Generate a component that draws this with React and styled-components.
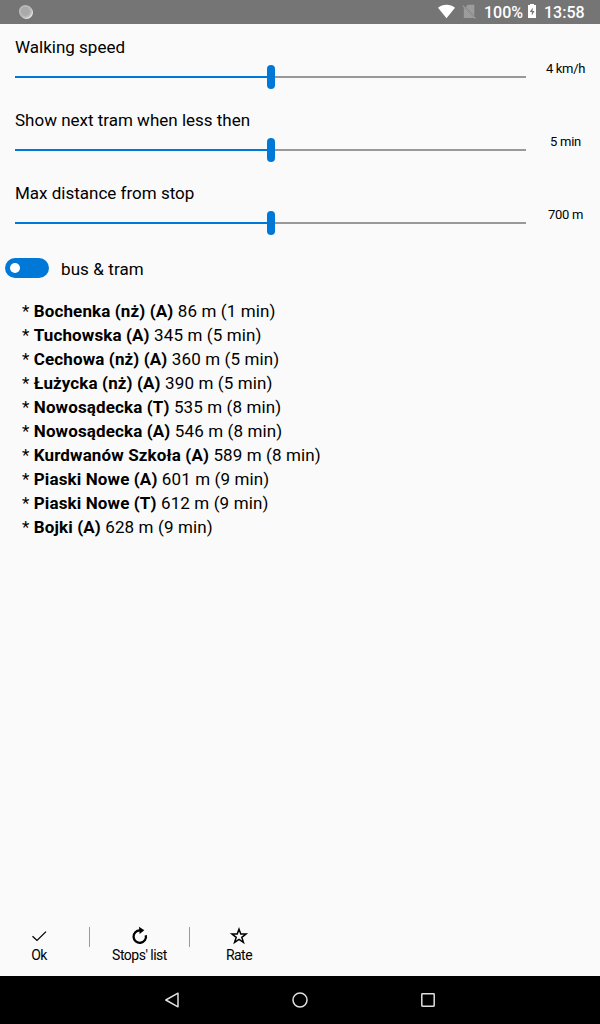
import React from "react";
import styled, { createGlobalStyle } from "styled-components";

const GlobalStyle = createGlobalStyle`
  body { margin: 0; background: #fafafa; }
  * { box-sizing: border-box; }
`;

const Screen = styled.div`
  width: 600px;
  height: 1024px;
  display: flex;
  flex-direction: column;
  background: #fafafa;
  color: #000;
  font-family: Roboto, sans-serif;
  font-size: 17px;
  overflow: hidden;
`;

const StatusBar = styled.header`
  height: 24px;
  flex: none;
  display: flex;
  align-items: center;
  padding: 0 16px 0 18px;
  background: #757575;
  color: #fff;
`;

const StatusIcons = styled.div`
  margin-left: auto;
  height: 24px;
  display: flex;
  align-items: center;
`;

const StatusIcon = styled.svg`
  display: block;
  flex: none;
  margin-right: ${(p) => p.$gap || 0}px;
`;

const StatusText = styled.span`
  width: ${(p) => p.$width}px;
  margin-right: ${(p) => p.$gap || 0}px;
  font-size: 16px;
  font-weight: 500;
  line-height: 24px;
  padding-top: 1px;
  white-space: nowrap;
`;

const Settings = styled.main`
  flex: 1;
  display: flex;
  flex-direction: column;
`;

const SliderRow = styled.section`
  height: 73px;
  display: flex;
  padding-left: 15px;
`;

const SliderMain = styled.div`
  width: 511px;
  flex: none;
`;

const SliderLabel = styled.div`
  height: 41px;
  padding-top: 11px;
  line-height: 24px;
  white-space: nowrap;
`;

const Track = styled.div`
  height: 24px;
  display: flex;
  align-items: center;
`;

const Rail = styled.div`
  height: 2px;
  width: ${(p) => p.$width}px;
  background: ${(p) => (p.$filled ? "#0078d7" : "#999")};
`;

const Thumb = styled.div`
  width: 8px;
  height: 24px;
  border-radius: 4px;
  background: #0078d7;
`;

const SliderValue = styled.div`
  flex: 1;
  padding: 35px 0 0 5px;
  text-align: center;
  font-size: 13px;
  line-height: 20px;
  letter-spacing: -0.3px;
`;

const ToggleRow = styled.div`
  display: flex;
  align-items: center;
  gap: 12px;
  height: 24px;
  margin-top: 14px;
  padding-left: 5px;
`;

const Toggle = styled.div`
  width: 44px;
  height: 20px;
  padding: 5px;
  border-radius: 10px;
  background: #0078d7;
  margin-bottom: 2px;
`;

const Knob = styled.div`
  width: 10px;
  height: 10px;
  border-radius: 50%;
  background: #fff;
`;

const ToggleLabel = styled.span`
  line-height: 24px;
  letter-spacing: 0.1px;
`;

const StopList = styled.ul`
  list-style: none;
  margin: 18px 0 0;
  padding: 0 0 0 22px;
`;

const Stop = styled.li`
  height: 24px;
  line-height: 24px;
  letter-spacing: 0.12px;
  white-space: nowrap;
`;

const StopName = styled.b`
  font-weight: 700;
`;

const CommandBar = styled.footer`
  height: 56px;
  flex: none;
  display: flex;
`;

const Command = styled.div`
  width: ${(p) => p.$width}px;
  display: flex;
  flex-direction: column;
  align-items: center;
  padding-top: 6px;
  font-size: 14px;
  line-height: 18px;
  letter-spacing: -0.5px;
  white-space: nowrap;
`;

const CommandIcon = styled.svg`
  display: block;
  width: 20px;
  height: 20px;
`;

const Divider = styled.div`
  width: 1px;
  height: 20px;
  margin-top: 7px;
  margin-left: ${(p) => p.$before || 0}px;
  background: #999;
`;

const NavBar = styled.nav`
  height: 48px;
  flex: none;
  display: flex;
  align-items: center;
  justify-content: center;
  gap: 104px;
  background: #000;
`;

const NavIcon = styled.svg`
  width: 24px;
  height: 24px;
  fill: none;
  stroke: #e0e0e0;
  stroke-width: 1.5;
`;

const sliders = [
  { label: "Walking speed", value: "4 km/h" },
  { label: "Show next tram when less then", value: "5 min" },
  { label: "Max distance from stop", value: "700 m" },
];

const stops = [
  ["Bochenka (nż) (A)", "86 m (1 min)"],
  ["Tuchowska (A)", "345 m (5 min)"],
  ["Cechowa (nż) (A)", "360 m (5 min)"],
  ["Łużycka (nż) (A)", "390 m (5 min)"],
  ["Nowosądecka (T)", "535 m (8 min)"],
  ["Nowosądecka (A)", "546 m (8 min)"],
  ["Kurdwanów Szkoła (A)", "589 m (8 min)"],
  ["Piaski Nowe (A)", "601 m (9 min)"],
  ["Piaski Nowe (T)", "612 m (9 min)"],
  ["Bojki (A)", "628 m (9 min)"],
];

export default function App() {
  return (
    <Screen>
      <GlobalStyle />
      <StatusBar>
        <StatusIcon width="16" height="16" viewBox="0 0 16 16">
          <circle cx="8.5" cy="8.5" r="6.5" fill="#e4e4e4" />
          <circle cx="7.4" cy="7.4" r="6.5" fill="#b9b9b9" />
          <circle cx="7.3" cy="7.3" r="4.6" fill="#aaa" />
        </StatusIcon>
        <StatusIcons>
          <StatusIcon $gap={7} width="18" height="16" viewBox="0 0 18 16">
            <path d="M1 3.7C5.5-.2 13.5-.2 18 3.7L9.5 14.2z" fill="#fff" />
          </StatusIcon>
          <StatusIcon $gap={8} width="14" height="16" viewBox="0 0 14 16">
            <path d="M5.8 .8H12.3V11.9L3.6 3zM1.8 3.6 12 14H1.8z" fill="#9c9c9c" />
            <path d="M.8 1.6 13.4 14.5" stroke="#9c9c9c" strokeWidth="1.2" />
          </StatusIcon>
          <StatusText $width={38} $gap={6}>100%</StatusText>
          <StatusIcon $gap={8} width="8" height="16" viewBox="0 0 8 16">
            <path d="M0 1H2V-.5H6V1H8V14H0z" fill="#fff" />
            <path d="M4.8 3.5 1.8 8h2v3.6L6.5 7h-2z" fill="#757575" />
          </StatusIcon>
          <StatusText $width={40}>13:58</StatusText>
        </StatusIcons>
      </StatusBar>
      <Settings>
        {sliders.map((s) => (
          <SliderRow key={s.label}>
            <SliderMain>
              <SliderLabel>{s.label}</SliderLabel>
              <Track>
                <Rail $filled $width={252} />
                <Thumb />
                <Rail $width={251} />
              </Track>
            </SliderMain>
            <SliderValue>{s.value}</SliderValue>
          </SliderRow>
        ))}
        <ToggleRow>
          <Toggle>
            <Knob />
          </Toggle>
          <ToggleLabel>bus &amp; tram</ToggleLabel>
        </ToggleRow>
        <StopList>
          {stops.map(([name, info]) => (
            <Stop key={name}>
              * <StopName>{name}</StopName> {info}
            </Stop>
          ))}
        </StopList>
      </Settings>
      <CommandBar>
        <Command $width={78}>
          <CommandIcon viewBox="0 0 20 20">
            <path d="M3.5 10.2 8 14.4 17 5.6" fill="none" stroke="#000" strokeWidth="1.3" />
          </CommandIcon>
          Ok
        </Command>
        <Divider $before={11} />
        <Command $width={99}>
          <CommandIcon viewBox="0 0 20 20">
            <path d="M10 4.4A6.2 6.2 0 1 0 15.8 9.2" fill="none" stroke="#000" strokeWidth="2.3" />
            <path d="M9 .8 14.3 4.3 9.6 8z" fill="#000" />
          </CommandIcon>
          Stops' list
        </Command>
        <Divider />
        <Command $width={98}>
          <CommandIcon viewBox="0 0 20 20">
            <path d="M10 3.2 11.8 8.1H17L12.8 11.3 14.4 16.3 10 13.3 5.6 16.3 7.2 11.3 3 8.1H8.2z" fill="none" stroke="#000" strokeWidth="1.5" />
          </CommandIcon>
          Rate
        </Command>
      </CommandBar>
      <NavBar>
        <NavIcon viewBox="0 0 24 24">
          <path d="M5.8 12 18 5.2V18.8z" strokeLinejoin="round" />
        </NavIcon>
        <NavIcon viewBox="0 0 24 24">
          <circle cx="12" cy="12" r="7" />
        </NavIcon>
        <NavIcon viewBox="0 0 24 24">
          <rect x="5.8" y="5.8" width="12.4" height="12.4" rx="0.6" />
        </NavIcon>
      </NavBar>
    </Screen>
  );
}
